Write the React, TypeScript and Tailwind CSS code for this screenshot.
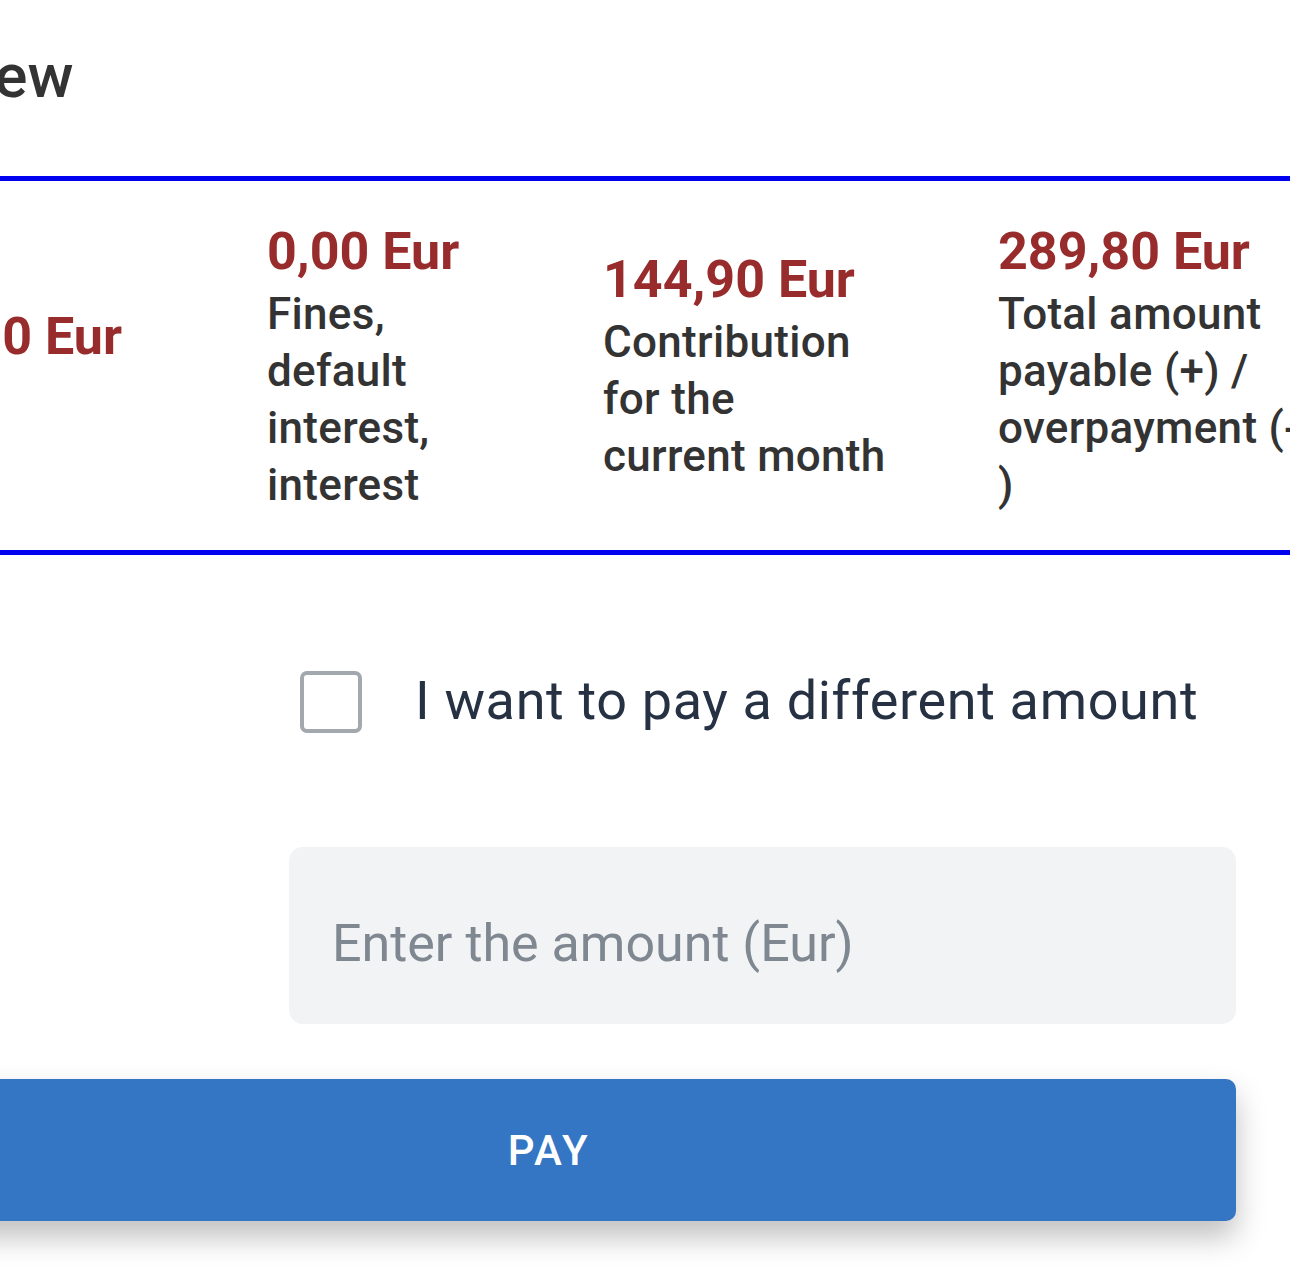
const columns = [
  { amount: '144,90 Eur', lines: ['Debt'] },
  { amount: '0,00 Eur', lines: ['Fines,', 'default', 'interest,', 'interest'] },
  { amount: '144,90 Eur', lines: ['Contribution', 'for the', 'current month'] },
  { amount: '289,80 Eur', lines: ['Total amount', 'payable (+) /', 'overpayment (-', ')'] },
];

export default function App() {
  return (
    <div className="w-[1290px] h-[1288px] overflow-hidden bg-white font-['Roboto','Liberation_Sans',sans-serif]">
      <div className="-ml-[138px] w-[1700px]">
        <h1 className="pt-[39px] -ml-[43px] text-[62px] leading-[74px] font-medium text-[#333333]">
          Overview
        </h1>

        <div className="mt-[63px] border-y-[5px] border-[#0000f0]">
          <div className="grid grid-cols-[405px_336px_395px_340px] h-[369px] items-center">
            {columns.map((col, i) => (
              <div key={i} className={i === 0 ? 'flex justify-end pr-[145px]' : ''}>
                <div>
                  <div className="text-[52px] leading-[68px] font-bold text-[#982b2b] whitespace-nowrap">
                    {col.amount}
                  </div>
                  {col.lines.map((line) => (
                    <div
                      key={line}
                      className={
                        'text-[44px] leading-[57px] font-medium tracking-[0.3px] text-[#333333] whitespace-nowrap ' +
                        (i === 0 ? 'invisible' : '')
                      }
                    >
                      {line}
                    </div>
                  ))}
                </div>
              </div>
            ))}
          </div>
        </div>

        <div className="w-[1374px] pt-[116px]">
          <label className="ml-[438px] flex items-center gap-[53px] h-[62px]">
            <span className="w-[62px] h-[62px] shrink-0 rounded-[7px] border-[4px] border-[#a3a8ae] bg-white" />
            <span className="text-[54px] leading-none tracking-[0.65px] text-[#263243] whitespace-nowrap -mt-[3px]">
              I want to pay a different amount
            </span>
          </label>

          <div className="ml-[427px] mt-[114px] h-[177px] rounded-[14px] bg-[#f1f3f5] flex items-center pl-[43px] pt-[16px]">
            <span className="text-[52px] leading-none text-[#7f8790] whitespace-nowrap">
              Enter the amount (Eur)
            </span>
          </div>

          <button className="mt-[55px] w-full h-[142px] rounded-[10px] bg-[#3476c4] shadow-[0_16px_30px_rgba(0,0,0,0.25)] flex items-center justify-center">
            <span className="text-[42px] font-medium tracking-[2.5px] text-white">PAY</span>
          </button>
        </div>
      </div>
    </div>
  );
}
